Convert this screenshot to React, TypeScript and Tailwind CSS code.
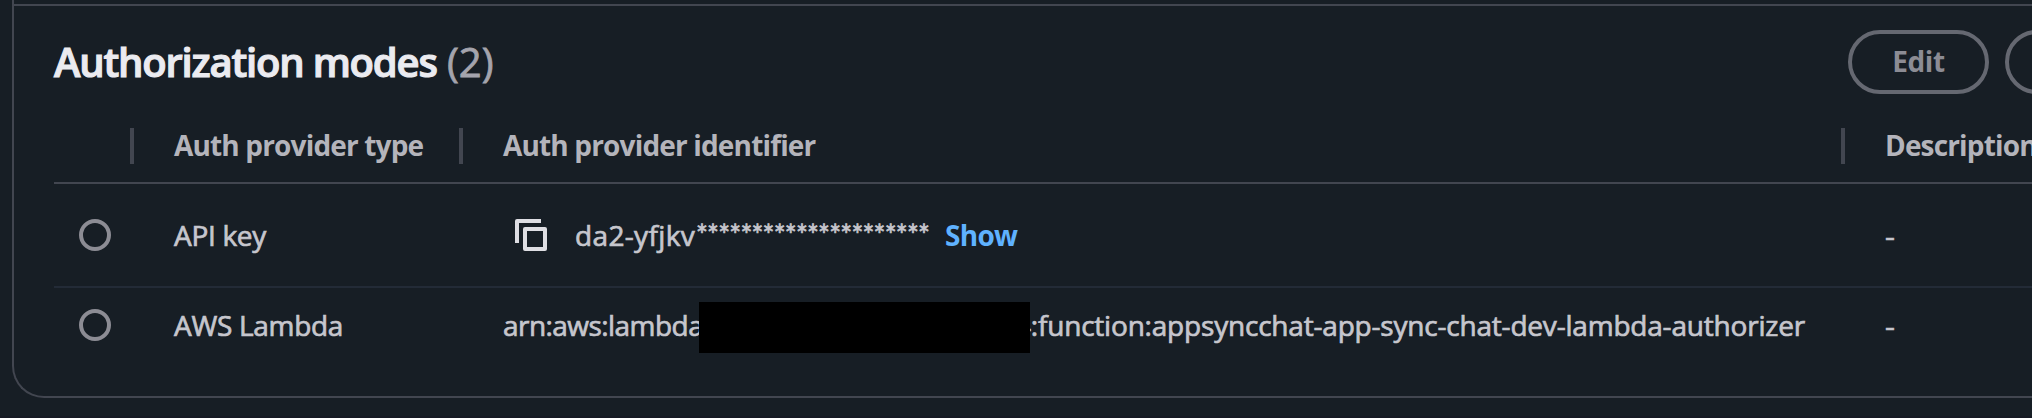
import type { ReactNode } from "react";

function CopyIcon() {
  return (
    <svg width="32" height="32" viewBox="0 0 32 32" fill="none" stroke="#dedee3" strokeWidth="4" strokeLinejoin="round">
      <path d="M2 24V2H26" />
      <path d="M10 10H30V30H10Z" />
    </svg>
  );
}

function Radio() {
  return <span className="ml-[25px] block size-8 rounded-full border-4 border-[#8c8c94]" />;
}

function HeaderCell({ children, divider = true }: { children?: ReactNode; divider?: boolean }) {
  return (
    <div className="flex items-center justify-between pl-10">
      <span>{children}</span>
      {divider && <span className="mt-[2px] h-9 w-1 shrink-0 bg-[#424650]" />}
    </div>
  );
}

function Row({ type, className, children }: { type: string; className: string; children: ReactNode }) {
  return (
    <div className={`grid grid-cols-[80px_329px_1382px_147px] ${className}`}>
      <div className="flex items-center">
        <Radio />
      </div>
      <div className="flex items-center pl-10">{type}</div>
      <div className="flex items-center pl-10">{children}</div>
      <div className="flex items-center pl-10">
        <span className="origin-left scale-x-110">-</span>
      </div>
    </div>
  );
}

export default function App() {
  return (
    <div className="h-[418px] w-full overflow-hidden whitespace-nowrap border-b-2 border-[#161a24] bg-[#171e25] font-['Open_Sans',sans-serif] text-[28px] leading-10 text-[#c6c6cd]">
      <section className="ml-3 h-[398px] rounded-bl-[32px] border-b-2 border-l-2 border-[#424650] pt-1">
        <div className="h-[392px] border-t-2 border-[#424650] pl-10">
          <header className="flex h-[102px] items-start pt-6">
            <h2 className="flex w-[1794px] shrink-0 pt-2 text-[40px] leading-[48px]">
              <span className="w-[393px] font-semibold tracking-[-1.2px] text-[#ebebf0] [-webkit-text-stroke:1.1px_#ebebf0]">
                Authorization modes
              </span>
              <span className="text-[#a4a4ad] [-webkit-text-stroke:0.8px_#a4a4ad]">(2)</span>
            </h2>
            <div className="flex shrink-0 gap-4 font-bold text-[#8c8c94]">
              <button className="h-16 w-[141px] rounded-full border-4 border-[#656871] pb-[2px] tracking-[-0.4px]">Edit</button>
              <button className="h-16 w-[180px] rounded-full border-4 border-[#656871]" />
            </div>
          </header>

          <div className="grid h-[76px] grid-cols-[80px_329px_1382px_147px] border-b-2 border-[#424650] font-bold tracking-[-0.84px] text-[#b4b4bb]">
            <HeaderCell />
            <HeaderCell>Auth provider type</HeaderCell>
            <HeaderCell>Auth provider identifier</HeaderCell>
            <HeaderCell divider={false}>Description</HeaderCell>
          </div>

          <div className="tracking-[-0.3px] [-webkit-text-stroke:0.7px_#c6c6cd]">
            <Row type="API key" className="h-[104px] border-b-2 border-[#232b37]">
              <span className="ml-3 w-[60px]">
                <CopyIcon />
              </span>
              <span className="w-[121px] tracking-[0.35px]">da2-yfjkv</span>
              <span className="w-[249px] font-['Lato',sans-serif] tracking-[-0.8px]">*********************</span>
              <a className="font-bold tracking-[-0.7px] text-[#5fb2ff] [-webkit-text-stroke:0px]">Show</a>
            </Row>
            <Row type="AWS Lambda" className="h-[74px]">
              <span className="w-[196px] tracking-[-0.55px]">arn:aws:lambda</span>
              <span className="relative z-10 mt-[5px] h-[51px] w-[331px] shrink-0 bg-black" />
              <span className="ml-[-15px] tracking-[-0.2px]">4:function:appsyncchat-app-sync-chat-dev-lambda-authorizer</span>
            </Row>
          </div>
        </div>
      </section>
    </div>
  );
}
